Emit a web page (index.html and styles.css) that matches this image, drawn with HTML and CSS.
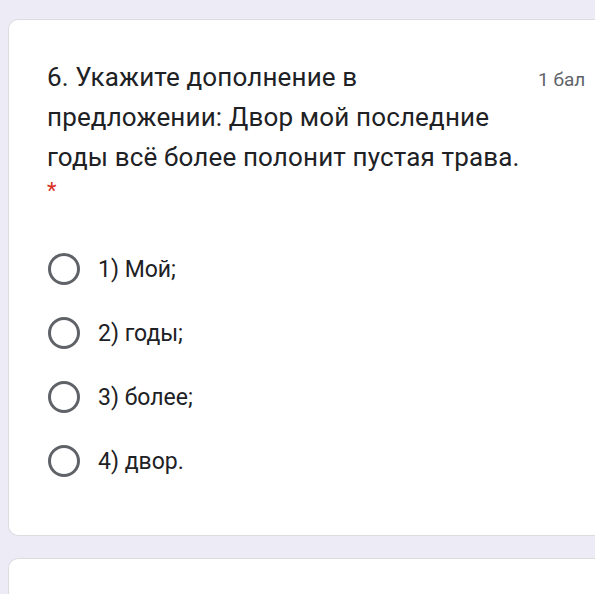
FILE: index.html
```html
<!DOCTYPE html>
<html lang="ru">
<head>
<meta charset="utf-8">
<link rel="stylesheet" href="styles.css">
</head>
<body>
<div class="page">
  <div class="card">
    <div class="head">
      <div class="title">6. Укажите дополнение в предложении: Двор мой последние годы всё более полонит пустая трава.<div class="req">*</div></div>
      <div class="points">1 бал</div>
    </div>
    <div class="options">
      <div class="opt"><span class="radio"></span><span class="label">1) Мой;</span></div>
      <div class="opt"><span class="radio"></span><span class="label">2) годы;</span></div>
      <div class="opt"><span class="radio"></span><span class="label">3) более;</span></div>
      <div class="opt"><span class="radio"></span><span class="label">4) двор.</span></div>
    </div>
  </div>
  <div class="card next"></div>
</div>
</body>
</html>
```
FILE: styles.css
```css
html, body { margin: 0; padding: 0; }
body {
  background: #edebf5;
  font-family: Roboto, "Noto Sans", sans-serif;
  color: #202124;
  width: 595px;
  height: 594px;
  overflow: hidden;
}
.page {
  padding-top: 19px;
  padding-left: 8px;
  display: flex;
  flex-direction: column;
  gap: 22px;
}
.card {
  background: #fff;
  border: 1px solid #dadce0;
  border-right: none;
  border-radius: 10px 0 0 10px;
  width: 600px;
  box-sizing: border-box;
}
.head {
  display: flex;
  justify-content: space-between;
  padding: 37px 0 0 38px;
}
.title {
  width: 486px;
  font-size: 26px;
  line-height: 40px;
  letter-spacing: 0.15px;
}
.req {
  color: #d93025;
  font-size: 22px;
  line-height: 28px;
}
.points {
  font-size: 19px;
  color: #5f6368;
  padding-top: 11px;
  width: 70px;
}
.options {
  padding: 47px 0 57px 39px;
  display: flex;
  flex-direction: column;
  gap: 30px;
}
.opt {
  display: flex;
  align-items: center;
  gap: 18px;
  height: 34px;
}
.radio {
  border: 3px solid #5f6368;
  border-radius: 50%;
  box-sizing: border-box;
  width: 32px;
  height: 32px;
  flex: none;
}
.label {
  font-size: 23px;
}
.next {
  height: 60px;
}
```
